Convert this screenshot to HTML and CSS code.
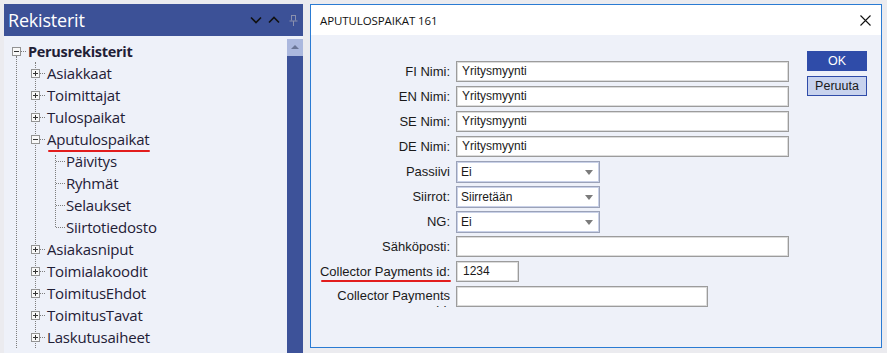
FILE: index.html
```html
<!DOCTYPE html>
<html lang="fi">
<head>
    <meta charset="UTF-8">
    <title>Aputulospaikat</title>
    <link rel="stylesheet" href="styles.css">
</head>
<body>
<div class="screen">

    <aside class="panel">
        <div class="panel-head">
            <span class="panel-title">Rekisterit</span>
            <span class="head-icons">
                <svg width="12" height="8" viewBox="0 0 12 8"><polyline points="1,1.5 6,6.5 11,1.5" fill="none" stroke="#111" stroke-width="1.6"/></svg>
                <svg width="12" height="8" viewBox="0 0 12 8"><polyline points="1,6.5 6,1.5 11,6.5" fill="none" stroke="#111" stroke-width="1.6"/></svg>
                <svg class="pin" width="9" height="11" viewBox="0 0 9 11"><path d="M2 0.5h5M2.5 0.5v5M6.5 0.5v5M0.5 6h8M4.5 6v5" fill="none" stroke="#8a90ad" stroke-width="1"/></svg>
            </span>
        </div>
        <div class="panel-body">
            <div class="tree">
                <div class="row root"><span class="box minus"></span><span class="dots"></span><b>Perusrekisterit</b></div>
                <div class="level1">
                    <div class="children">
                        <div class="row"><span class="box plus"></span><span class="dots"></span>Asiakkaat</div>
                        <div class="row"><span class="box plus"></span><span class="dots"></span>Toimittajat</div>
                        <div class="row"><span class="box plus"></span><span class="dots"></span>Tulospaikat</div>
                        <div class="row"><span class="box minus"></span><span class="dots"></span><span class="marked">Aputulospaikat</span></div>
                        <div class="sub">
                            <div class="row"><span class="dots long"></span>Päivitys</div>
                            <div class="row"><span class="dots long"></span>Ryhmät</div>
                            <div class="row"><span class="dots long"></span>Selaukset</div>
                            <div class="row"><span class="dots long"></span>Siirtotiedosto</div>
                        </div>
                        <div class="row"><span class="box plus"></span><span class="dots"></span>Asiakasniput</div>
                        <div class="row"><span class="box plus"></span><span class="dots"></span>Toimialakoodit</div>
                        <div class="row"><span class="box plus"></span><span class="dots"></span>ToimitusEhdot</div>
                        <div class="row"><span class="box plus"></span><span class="dots"></span>ToimitusTavat</div>
                        <div class="row"><span class="box plus"></span><span class="dots"></span>Laskutusaiheet</div>
                    </div>
                </div>
            </div>
            <div class="scrollbar">
                <div class="scroll-up"></div>
                <div class="scroll-thumb"></div>
            </div>
        </div>
    </aside>

    <section class="dialog">
        <div class="dialog-title">
            <span>APUTULOSPAIKAT 161</span>
            <svg class="close" width="11" height="11" viewBox="0 0 11 11"><path d="M0.5 0.5L10.5 10.5M10.5 0.5L0.5 10.5" stroke="#111" stroke-width="1.1"/></svg>
        </div>
        <div class="dialog-body">
            <div class="form">
                <label>FI Nimi:</label><div class="input wide">Yritysmyynti</div>
                <label>EN Nimi:</label><div class="input wide">Yritysmyynti</div>
                <label>SE Nimi:</label><div class="input wide">Yritysmyynti</div>
                <label>DE Nimi:</label><div class="input wide">Yritysmyynti</div>
                <label>Passiivi</label><div class="select">Ei<span class="arrow"></span></div>
                <label>Siirrot:</label><div class="select">Siirretään<span class="arrow"></span></div>
                <label>NG:</label><div class="select">Ei<span class="arrow"></span></div>
                <label>Sähköposti:</label><div class="input wide"></div>
                <label><span class="marked red-label">Collector Payments id:</span></label><div class="input short">1234</div>
                <label class="clipped"><span class="wrap">Collector Payments id:</span></label><div class="input mid"></div>
            </div>
            <div class="buttons">
                <button class="btn ok">OK</button>
                <button class="btn cancel">Peruuta</button>
            </div>
        </div>
    </section>

</div>
</body>
</html>
```

FILE: styles.css
```css
body {
    margin: 0;
    padding: 4px 0 0 4px;
    background-color: #ebebef;
    overflow: hidden;
    height: 353px;
    box-sizing: border-box;
}

.screen {
    display: flex;
    align-items: flex-start;
}

/* Left panel */
.panel {
    width: 299px;
    height: 349px;
    display: flex;
    flex-direction: column;
    background-color: #eef1f9;
}

.panel-head {
    height: 32px;
    background-color: #3c5197;
    display: flex;
    align-items: center;
    padding-left: 4px;
}

.panel-title {
    font-family: "Open Sans", sans-serif;
    font-size: 18px;
    color: #fff;
    letter-spacing: -0.2px;
}

.head-icons {
    margin-left: auto;
    display: flex;
    align-items: center;
    gap: 6px;
    padding-right: 5px;
}

.head-icons .pin {
    margin-left: 3px;
}

.panel-body {
    margin-top: 3px;
    flex: 1;
    display: flex;
    overflow: hidden;
}

.tree {
    flex: 1;
    padding-top: 1px;
    font-family: "Open Sans", sans-serif;
    font-size: 15px;
    letter-spacing: -0.2px;
    color: #1f2036;
}

.row {
    height: 22px;
    display: flex;
    align-items: center;
    white-space: nowrap;
}

.root {
    padding-left: 8px;
    position: relative;
    z-index: 1;
}

.root b {
    font-weight: 700;
    font-size: 14.5px;
    letter-spacing: -0.3px;
}

.box {
    width: 9px;
    height: 9px;
    box-sizing: border-box;
    border: 1px solid #939393;
    background-color: #f8f8f8;
    flex: none;
}

.box.minus {
    background: linear-gradient(#333, #333) center / 5px 1px no-repeat, #f8f8f8;
}

.box.plus {
    background:
        linear-gradient(#333, #333) center / 5px 1px no-repeat,
        linear-gradient(#333, #333) center / 1px 5px no-repeat,
        #f8f8f8;
}

.dots {
    width: 5px;
    border-top: 1px dotted #7d7d7d;
    margin-right: 2px;
    flex: none;
}

.dots.long {
    width: 9px;
    margin-right: 1px;
}

.level1 {
    margin-left: 12px;
    margin-top: -6px;
    padding-top: 6px;
    border-left: 1px dotted #7d7d7d;
}

.children {
    margin-left: 18px;
    border-left: 1px dotted #7d7d7d;
}

.children > .row .box {
    margin-left: -5px;
}

.sub {
    margin-left: 19px;
    position: relative;
}

.sub::before {
    content: "";
    position: absolute;
    left: 0;
    top: 5px;
    bottom: 11px;
    border-left: 1px dotted #7d7d7d;
}

.sub .row {
    padding-left: 1px;
}

.marked {
    position: relative;
}

.marked::after {
    content: "";
    position: absolute;
    left: 1px;
    right: -1px;
    bottom: -3px;
    height: 2px;
    background-color: #e21d1d;
    border-radius: 1px;
}

.scrollbar {
    width: 16px;
    display: flex;
    flex-direction: column;
}

.scroll-up {
    height: 17px;
    background-color: #abb8de;
    position: relative;
}

.scroll-up::after {
    content: "";
    position: absolute;
    left: 4px;
    top: 6px;
    border-left: 4px solid transparent;
    border-right: 4px solid transparent;
    border-bottom: 4px solid #6a7596;
}

.scroll-thumb {
    flex: 1;
    background-color: #3d5299;
}

/* Dialog */
.dialog {
    margin-left: 7px;
    width: 572px;
    height: 344px;
    box-sizing: border-box;
    border: 1px solid #2a7bd3;
    background-color: #eef1f9;
    display: flex;
    flex-direction: column;
}

.dialog-title {
    height: 30px;
    background-color: #fff;
    display: flex;
    align-items: center;
    padding: 0 10px 0 9px;
    font-family: "Open Sans", sans-serif;
    font-size: 11.5px;
    letter-spacing: -0.1px;
    color: #111;
}

.dialog-title .close {
    margin-left: auto;
}

.dialog-body {
    display: flex;
    padding: 16px 14px 0 0;
}

.form {
    margin-top: 8px;
    display: grid;
    grid-template-columns: 137px 333px;
    grid-auto-rows: 25px;
    column-gap: 8px;
    align-items: center;
    font-family: "Liberation Sans", Arial, sans-serif;
    font-size: 13px;
    color: #1a1a1a;
}

.form label {
    text-align: right;
    white-space: nowrap;
    margin-right: -2px;
}

.form label.clipped {
    align-self: start;
    overflow: hidden;
    white-space: normal;
    padding-top: 4px;
    line-height: 15px;
    box-sizing: border-box;
    height: 23px;
}

.wrap {
    display: inline-block;
    width: 125px;
}

.input {
    height: 21px;
    box-sizing: border-box;
    border: 1px solid #9c9c9c;
    box-shadow: inset 0 0 0 1px #dcdcdc;
    background-color: #fff;
    padding-left: 5px;
    line-height: 19px;
    font-size: 12px;
}

.input.wide { width: 333px; }
.input.short { width: 63px; padding-left: 6px; }
.input.mid { width: 252px; }

.select {
    width: 144px;
    height: 22px;
    box-sizing: border-box;
    border: 1px solid #9ba2b8;
    box-shadow: inset 0 0 0 1px #c9d1e8;
    background-color: #fff;
    padding-left: 4px;
    line-height: 20px;
    font-size: 12px;
    position: relative;
}

.arrow {
    position: absolute;
    right: 6px;
    top: 8px;
    border-left: 4.5px solid transparent;
    border-right: 4.5px solid transparent;
    border-top: 5px solid #7b7b7b;
}

.buttons {
    margin-left: auto;
    width: 60px;
    display: flex;
    flex-direction: column;
    gap: 5px;
}

.btn {
    height: 20px;
    width: 60px;
    box-sizing: border-box;
    font-family: "Liberation Sans", Arial, sans-serif;
    font-size: 12.5px;
    padding: 0;
    cursor: pointer;
}

.btn.ok {
    background-color: #2f4ca9;
    border: 1px solid #2f4ca9;
    color: #fff;
}

.btn.cancel {
    background-color: #c8d3ee;
    border: 1px solid #2f4ca9;
    color: #1a1a1a;
}
```
